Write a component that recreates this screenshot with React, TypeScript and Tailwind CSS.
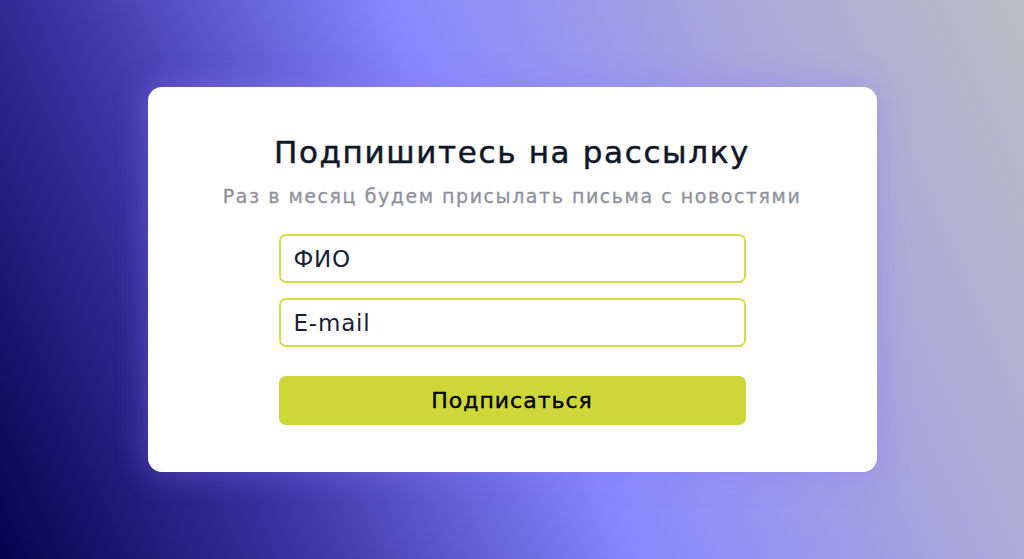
import React from "react";

const font = { fontFamily: '"DejaVu Sans", "Noto Sans", sans-serif' };

export default function App() {
  return (
    <div
      className="w-[1024px] h-[559px] flex items-center justify-center bg-[linear-gradient(66deg,#05034d_0%,#3d36a8_25%,#8987ff_50%,#a6a6dd_75%,#bdbdc4_100%)]"
      style={font}
    >
      <div className="w-[729px] h-[385px] bg-white rounded-[14px] shadow-[0_0_30px_2px_rgba(140,120,250,0.4)] flex flex-col items-center pt-[45px]">
        <h1 className="text-[31px] leading-[40px] text-[#0f1729] tracking-[1.65px] [-webkit-text-stroke:0.5px_#0f1729]">
          Подпишитесь на рассылку
        </h1>
        <p className="mt-[12px] text-[19px] leading-[24px] text-[#8e919c] tracking-[1.55px] [-webkit-text-stroke:0.3px_#8e919c]">
          Раз в месяц будем присылать письма с новостями
        </p>
        <form className="mt-[26px] w-[467px] flex flex-col gap-[15px]">
          <input
            className="h-[49px] w-full rounded-[7px] border-2 border-[#d4de4c] px-[13px] text-[23px] tracking-[0.8px] text-[#1a1f36] placeholder:text-[#1a1f36] outline-none"
            placeholder="ФИО"
            style={font}
          />
          <input
            className="h-[49px] w-full rounded-[7px] border-2 border-[#d4de4c] px-[13px] text-[23px] tracking-[0.8px] text-[#1a1f36] placeholder:text-[#1a1f36] outline-none"
            placeholder="E-mail"
            style={font}
          />
          <button
            type="button"
            className="mt-[14px] h-[49px] w-full rounded-[7px] bg-[#cdd739] text-[22px] tracking-[1px] text-black [-webkit-text-stroke:0.4px_#000]"
            style={font}
          >
            Подписаться
          </button>
        </form>
      </div>
    </div>
  );
}
